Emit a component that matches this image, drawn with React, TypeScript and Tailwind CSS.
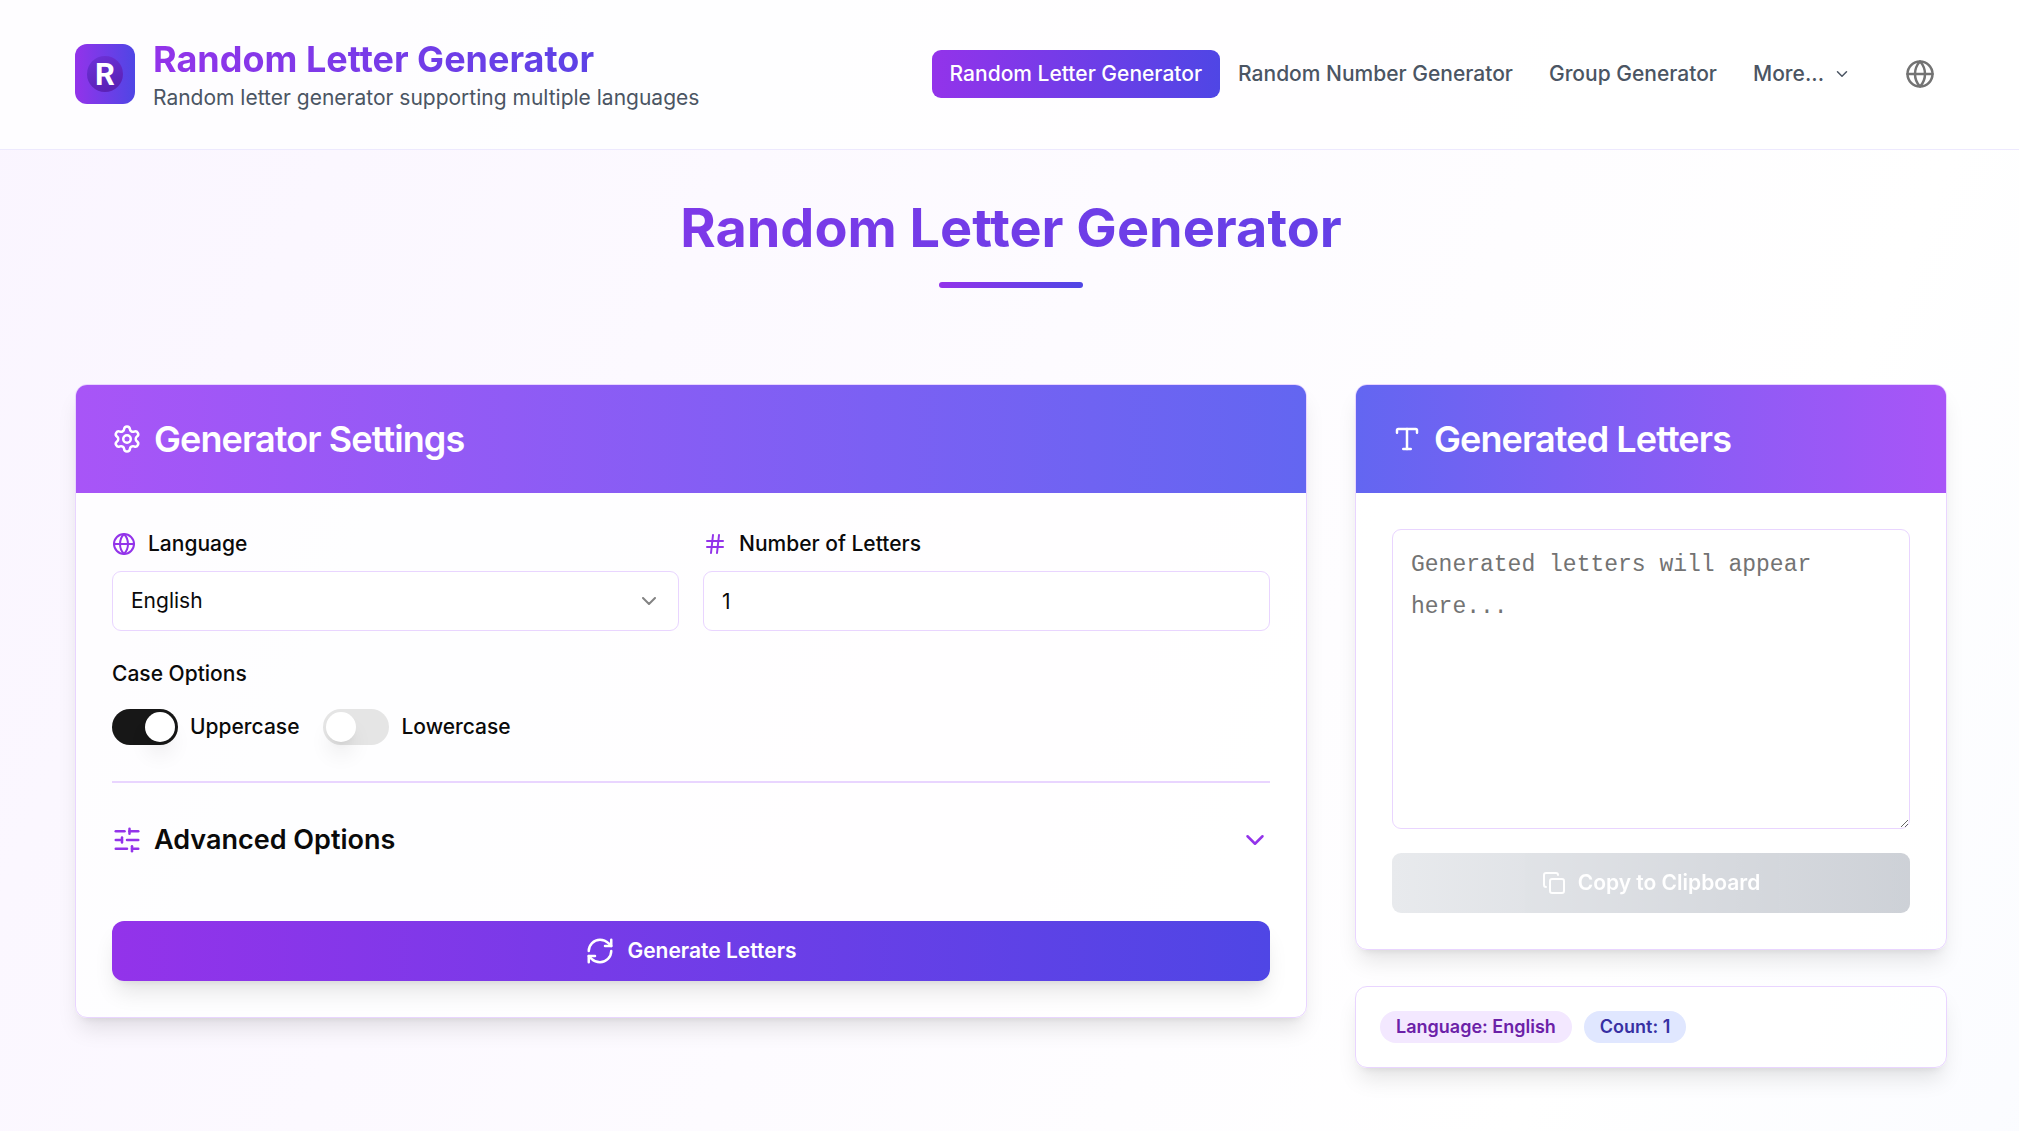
import { useState } from "react"
import type { ReactNode } from "react"
import { ChevronDown, Copy, Globe, Hash, RefreshCw, Settings, SlidersHorizontal, Type } from "lucide-react"

const navLinks = ["Random Letter Generator", "Random Number Generator", "Group Generator"]
const languages = ["English", "Spanish", "French", "German", "Greek", "Russian"]

const cardClass =
  "overflow-hidden rounded-xl border border-[#e9d5ff] bg-white/80 shadow-[0_15px_22px_-4px_rgba(0,0,0,0.1),0_6px_9px_-6px_rgba(0,0,0,0.1)]"

function Logo() {
  return (
    <div className="flex size-[60px] items-center justify-center rounded-xl bg-linear-to-r/srgb from-[#9333ea] to-[#4f46e5]">
      <svg viewBox="0 0 36 36" className="size-9" role="img" aria-label="R">
        <defs>
          <linearGradient id="logo-disc" x1="0" y1="0" x2="0.4" y2="1">
            <stop offset="0" stopColor="#6d32d9" />
            <stop offset="1" stopColor="#5b21b6" />
          </linearGradient>
        </defs>
        <circle cx="18" cy="18" r="18" fill="url(#logo-disc)" />
        <text x="18" y="29" textAnchor="middle" fill="#fff" fontSize="31" fontWeight="700" fontFamily="Roboto, sans-serif">
          R
        </text>
      </svg>
    </div>
  )
}

function Header() {
  return (
    <header className="border-b border-[#ede9fe] bg-white/80">
      <div className="flex items-center justify-between pt-[35px] pr-[72px] pb-9 pl-[75px]">
        <a href="#" className="flex items-center gap-[18px]">
          <Logo />
          <div>
            <div className="bg-linear-to-r/srgb from-[#9333ea] to-[#4f46e5] bg-clip-text text-[36px] leading-[48px] font-bold text-transparent">
              Random Letter Generator
            </div>
            <p className="text-[21px] leading-[30px] text-[#4b5563]">Random letter generator supporting multiple languages</p>
          </div>
        </a>
        <div className="flex items-center gap-6">
          <nav className="flex items-center text-[21px] leading-[30px] font-medium text-[#4b5563]">
            {navLinks.map((label, i) => (
              <a
                key={label}
                href="#"
                className={
                  i === 0
                    ? "rounded-[9px] bg-linear-to-r/srgb from-[#9333ea] to-[#4f46e5] px-[18px] py-[9px] text-white"
                    : "px-[18px] py-[9px]"
                }
              >
                {label}
              </a>
            ))}
            <button type="button" className="flex items-center gap-[9px] px-[18px] py-[9px]">
              More...
              <ChevronDown className="size-[18px]" />
            </button>
          </nav>
          <button type="button" aria-label="Change language" className="flex size-[54px] items-center justify-center text-[#737373]">
            <Globe className="size-[30px]" />
          </button>
        </div>
      </div>
    </header>
  )
}

function CardHeader({ icon, title, className }: { icon: ReactNode; title: string; className: string }) {
  return (
    <div className={`flex items-center gap-3 p-9 text-white ${className}`}>
      {icon}
      <h2 className="text-[36px] leading-9 font-semibold tracking-tight">{title}</h2>
    </div>
  )
}

function Toggle({ id, label, checked, onChange }: { id: string; label: string; checked: boolean; onChange: (v: boolean) => void }) {
  return (
    <div className="flex items-center gap-3">
      <input
        id={id}
        type="checkbox"
        role="switch"
        checked={checked}
        onChange={(e) => onChange(e.target.checked)}
        className="h-9 w-[66px] cursor-pointer appearance-none rounded-full bg-[#e5e5e5] p-[3px] before:block before:size-[30px] before:rounded-full before:bg-white before:shadow-[0_15px_22px_-4px_rgba(0,0,0,0.1),0_6px_9px_-6px_rgba(0,0,0,0.1)] checked:bg-[#171717] checked:before:ml-[30px]"
      />
      <label htmlFor={id} className="text-[21px] leading-[30px] font-medium">
        {label}
      </label>
    </div>
  )
}

export default function App() {
  const [language, setLanguage] = useState("English")
  const [count, setCount] = useState("1")
  const [uppercase, setUppercase] = useState(true)
  const [lowercase, setLowercase] = useState(false)
  const [letters, setLetters] = useState("")

  const generate = () => {
    const upper = "ABCDEFGHIJKLMNOPQRSTUVWXYZ"
    const pool = (uppercase ? upper : "") + (lowercase ? upper.toLowerCase() : "")
    if (!pool) return
    const picked = Array.from({ length: Number(count) || 0 }, () => pool[Math.floor(Math.random() * pool.length)])
    setLetters(picked.join(" "))
  }

  return (
    <div className="min-h-screen bg-linear-to-br/srgb from-[#faf5ff] via-white to-[#eef2ff] bg-[length:100%_400%] bg-no-repeat font-['Inter',sans-serif] text-[#0a0a0a]">
      <Header />

      <main className="py-12 pl-[75px] pr-[72px]">
        <div className="flex flex-col items-center gap-6 pb-24">
          <h1 className="w-full bg-linear-to-r/srgb from-[#9333ea] to-[#4f46e5] bg-clip-text text-center text-[54px] leading-[60px] font-bold text-transparent">
            Random Letter Generator
          </h1>
          <div className="h-1.5 w-36 rounded-full bg-linear-to-r/srgb from-[#9333ea] to-[#4f46e5]" />
        </div>

        <div className="grid grid-cols-3 items-start gap-12">
          {/* Settings */}
          <section className={`col-span-2 ${cardClass}`}>
            <CardHeader
              icon={<Settings className="size-[30px]" />}
              title="Generator Settings"
              className="bg-linear-to-r/srgb from-[#a855f7] to-[#6366f1]"
            />
            <div className="p-9">
              <div className="grid grid-cols-2 gap-6">
                <div className="flex flex-col gap-3">
                  <label htmlFor="language" className="flex items-center gap-3 text-[21px] leading-[30px] font-medium">
                    <Globe className="size-6 text-[#9333ea]" />
                    Language
                  </label>
                  <div className="relative">
                    <select
                      id="language"
                      value={language}
                      onChange={(e) => setLanguage(e.target.value)}
                      className="h-[60px] w-full appearance-none rounded-[9px] border border-[#e9d5ff] bg-white px-[18px] text-[21px]"
                    >
                      {languages.map((name) => (
                        <option key={name}>{name}</option>
                      ))}
                    </select>
                    <ChevronDown className="pointer-events-none absolute top-[18px] right-[18px] size-6 opacity-50" />
                  </div>
                </div>
                <div className="flex flex-col gap-3">
                  <label htmlFor="count" className="flex items-center gap-3 text-[21px] leading-[30px] font-medium">
                    <Hash className="size-6 text-[#9333ea]" />
                    Number of Letters
                  </label>
                  <input
                    id="count"
                    type="number"
                    min={1}
                    value={count}
                    onChange={(e) => setCount(e.target.value)}
                    className="h-[60px] w-full rounded-[9px] border border-[#e9d5ff] bg-white px-[18px] text-[21px]"
                  />
                </div>
              </div>

              <fieldset className="pt-6">
                <legend className="contents text-[21px] leading-[38px] font-medium">Case Options</legend>
                <div className="flex gap-6 pt-4">
                  <Toggle id="uppercase" label="Uppercase" checked={uppercase} onChange={setUppercase} />
                  <Toggle id="lowercase" label="Lowercase" checked={lowercase} onChange={setLowercase} />
                </div>
              </fieldset>

              <div className="mt-9 border-t-2 border-[#e9d5ff] pt-9">
                <button type="button" aria-expanded="false" className="flex w-full items-center gap-3">
                  <SlidersHorizontal className="size-[30px] text-[#9333ea]" />
                  <span className="text-[27px] leading-[42px] font-semibold">Advanced Options</span>
                  <ChevronDown className="ml-auto size-[30px] text-[#9333ea]" />
                </button>
              </div>

              <button
                type="button"
                onClick={generate}
                className="mt-[60px] flex h-[60px] w-full items-center justify-center gap-3 rounded-xl bg-linear-to-r/srgb from-[#9333ea] to-[#4f46e5] text-[21px] font-semibold text-white shadow-[0_15px_22px_-4px_rgba(0,0,0,0.1),0_6px_9px_-6px_rgba(0,0,0,0.1)]"
              >
                <RefreshCw className="size-[30px]" />
                Generate Letters
              </button>
            </div>
          </section>

          {/* Result */}
          <div className="flex flex-col gap-9">
            <section className={cardClass}>
              <CardHeader
                icon={<Type className="size-[30px]" />}
                title="Generated Letters"
                className="bg-linear-to-r/srgb from-[#6366f1] to-[#a855f7]"
              />
              <div className="flex flex-col gap-6 p-9">
                <textarea
                  readOnly
                  aria-label="Generated letters"
                  value={letters}
                  placeholder="Generated letters will appear here..."
                  className="h-[300px] w-full resize-y rounded-[9px] border border-[#e9d5ff] bg-white px-[18px] py-3.5 font-['Liberation_Mono',monospace] text-[23px] leading-[42px] placeholder:text-[#737373]"
                />
                <button
                  type="button"
                  disabled={!letters}
                  onClick={() => navigator.clipboard.writeText(letters)}
                  className="flex h-[60px] w-full items-center justify-center gap-3 rounded-[9px] bg-linear-to-r/srgb from-[#d1d5db] to-[#9ca3af] text-[21px] font-semibold text-white disabled:opacity-50"
                >
                  <Copy className="size-6" />
                  Copy to Clipboard
                </button>
              </div>
            </section>

            <section className={`flex gap-3 p-6 text-[18px] leading-6 font-semibold ${cardClass}`}>
              <span className="rounded-full bg-[#f3e8ff] px-4 py-1 text-[#6b21a8]">Language: {language}</span>
              <span className="rounded-full bg-[#e0e7ff] px-4 py-1 text-[#3730a3]">Count: {count}</span>
            </section>
          </div>
        </div>
      </main>
    </div>
  )
}
